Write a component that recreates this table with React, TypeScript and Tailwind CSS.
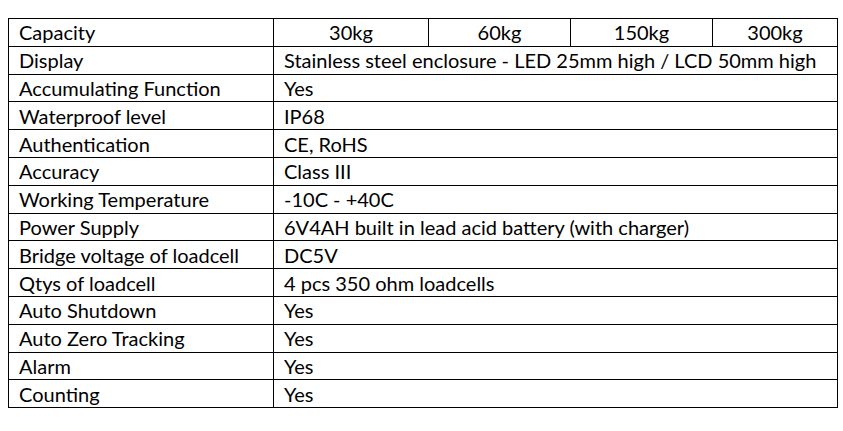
import React from 'react';

const rows: [string, string][] = [
  ['Display', 'Stainless steel enclosure - LED 25mm high / LCD 50mm high'],
  ['Accumulating Function', 'Yes'],
  ['Waterproof level', 'IP68'],
  ['Authentication', 'CE, RoHS'],
  ['Accuracy', 'Class III'],
  ['Working Temperature', '-10C - +40C'],
  ['Power Supply', '6V4AH built in lead acid battery (with charger)'],
  ['Bridge voltage of loadcell', 'DC5V'],
  ['Qtys of loadcell', '4 pcs 350 ohm loadcells'],
  ['Auto Shutdown', 'Yes'],
  ['Auto Zero Tracking', 'Yes'],
  ['Alarm', 'Yes'],
  ['Counting', 'Yes'],
];

const capacities = ['30kg', '60kg', '150kg', '300kg'];

export default function App() {
  return (
    <div className="w-[843px] h-[431px] bg-white pt-[18px] pl-[8px]" style={{ fontFamily: 'Lato, "Open Sans", sans-serif' }}>
      <table className="border-collapse text-[20px] leading-none text-black">
        <colgroup>
          <col className="w-[265px]" />
          <col className="w-[155px]" />
          <col className="w-[142px]" />
          <col className="w-[142px]" />
          <col className="w-[125px]" />
        </colgroup>
        <tbody>
          <tr className="h-[27.8px]">
            <td className="border border-black pl-[10px] align-middle">Capacity</td>
            {capacities.map((c) => (
              <td key={c} className="border border-black text-center align-middle">{c}</td>
            ))}
          </tr>
          {rows.map(([label, value]) => (
            <tr key={label} className="h-[27.8px]">
              <td className="border border-black pl-[10px] align-middle whitespace-nowrap">{label}</td>
              <td colSpan={4} className="border border-black pl-[10px] align-middle whitespace-nowrap">{value}</td>
            </tr>
          ))}
        </tbody>
      </table>
    </div>
  );
}
